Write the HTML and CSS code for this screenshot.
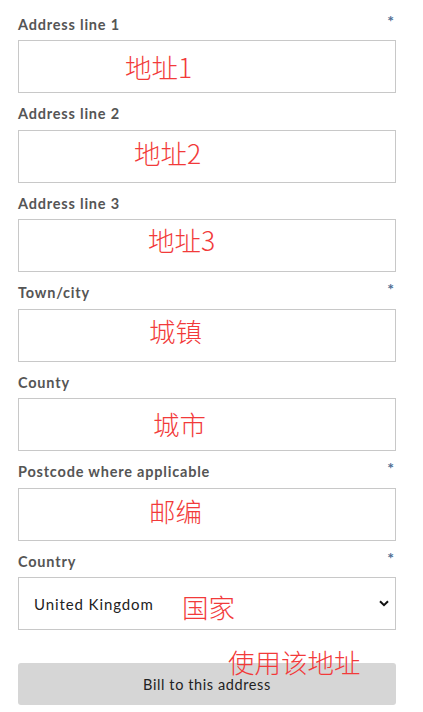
FILE: index.html
```html
<!DOCTYPE html>
<html lang="en">
<head>
    <meta charset="UTF-8">
    <meta name="viewport" content="width=device-width, initial-scale=1.0">
    <title>Billing address</title>
    <link rel="stylesheet" href="styles.css">
</head>
<body>

    <form class="address-form">
        <div class="field">
            <label class="field-label">Address line 1 <span class="req">*</span></label>
            <div class="input-wrap">
                <input class="text-input" type="text">
                <span class="note" style="left: 107px; top: 13px;">地址1</span>
            </div>
        </div>

        <div class="field">
            <label class="field-label">Address line 2</label>
            <div class="input-wrap">
                <input class="text-input" type="text">
                <span class="note" style="left: 116px; top: 9px;">地址2</span>
            </div>
        </div>

        <div class="field">
            <label class="field-label">Address line 3</label>
            <div class="input-wrap">
                <input class="text-input" type="text">
                <span class="note" style="left: 130px; top: 7px;">地址3</span>
            </div>
        </div>

        <div class="field">
            <label class="field-label">Town/city <span class="req">*</span></label>
            <div class="input-wrap">
                <input class="text-input" type="text">
                <span class="note" style="left: 131px; top: 8px;">城镇</span>
            </div>
        </div>

        <div class="field">
            <label class="field-label">County</label>
            <div class="input-wrap">
                <input class="text-input" type="text">
                <span class="note" style="left: 135px; top: 12px;">城市</span>
            </div>
        </div>

        <div class="field">
            <label class="field-label">Postcode where applicable <span class="req">*</span></label>
            <div class="input-wrap">
                <input class="text-input" type="text">
                <span class="note" style="left: 131px; top: 9px;">邮编</span>
            </div>
        </div>

        <div class="field">
            <label class="field-label">Country <span class="req">*</span></label>
            <div class="input-wrap">
                <select class="select-input">
                    <option>United Kingdom</option>
                </select>
                <svg class="chevron" width="10" height="7" viewBox="0 0 10 7">
                    <path d="M1 1.2 L5 5.2 L9 1.2" fill="none" stroke="#111" stroke-width="2"/>
                </svg>
                <span class="note" style="left: 164px; top: 16px;">国家</span>
            </div>
        </div>

        <div class="btn-wrap">
            <button type="button" class="bill-btn">Bill to this address</button>
            <span class="note" style="left: 210px; top: -15px;">使用该地址</span>
        </div>
    </form>

</body>
</html>
```

FILE: styles.css
```css
*{
    margin: 0;
    padding: 0;
    box-sizing: border-box;
}

body{
    background-color: #fff;
    font-family: 'Lato', 'Liberation Sans', sans-serif;
    color: #555;
}

.address-form{
    width: 378px;
    margin-left: 18px;
    padding-top: 14px;
    display: flex;
    flex-direction: column;
    gap: 10.5px;
}

.field{
    display: flex;
    flex-direction: column;
}

.field-label{
    height: 20px;
    margin-bottom: 6px;
    display: flex;
    justify-content: space-between;
    align-items: center;
    font-size: 14.5px;
    font-weight: bold;
    color: #555;
    letter-spacing: 0.8px;
}

.req{
    font-size: 16px;
    font-weight: bold;
    color: #4f6e93;
    margin-right: 2px;
    margin-top: -8px;
    letter-spacing: 0;
}

.input-wrap{
    position: relative;
    height: 53px;
}

.text-input,
.select-input{
    width: 100%;
    height: 53px;
    border: 1px solid #c8c8c8;
    background: #fff;
    outline: none;
}

.select-input{
    appearance: none;
    -webkit-appearance: none;
    padding-left: 15px;
    font-family: 'Lato', 'Liberation Sans', sans-serif;
    font-size: 15px;
    letter-spacing: 0.9px;
    color: #222;
}

.chevron{
    position: absolute;
    right: 7px;
    top: 23px;
}

.note{
    position: absolute;
    font-family: 'Noto Sans CJK SC', sans-serif;
    font-weight: 300;
    font-size: 26.5px;
    line-height: 28px;
    color: #f23a3a;
    white-space: nowrap;
    pointer-events: none;
}

.btn-wrap{
    position: relative;
    margin-top: 22.5px;
}

.bill-btn{
    width: 100%;
    height: 42px;
    border: none;
    border-radius: 3px;
    background-color: #d6d6d6;
    font-family: 'Lato', 'Liberation Sans', sans-serif;
    font-size: 14.5px;
    letter-spacing: 0.6px;
    color: #222;
}
```
